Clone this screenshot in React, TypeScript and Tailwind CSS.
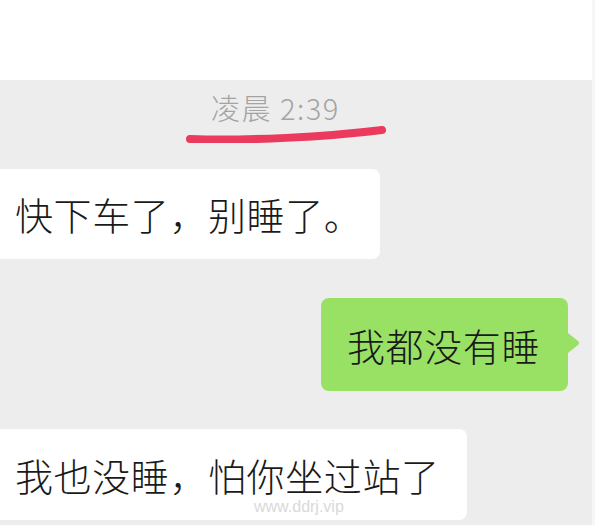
export default function App() {
  const font = { fontFamily: '"Noto Sans CJK SC", "Noto Sans", sans-serif' };

  return (
    <div className="w-[595px] h-[525px] overflow-hidden flex bg-[#ededed]" style={font}>
      <div className="w-[592px] shrink-0 flex flex-col">
        {/* top white strip */}
        <div className="h-[80px] shrink-0 bg-white" />

        <div className="flex flex-col">
          {/* time stamp + red marker underline */}
          <div className="mt-[13px] ml-[211px] text-[29px] leading-[29px] tracking-[1.5px] font-light text-[#a4a4a4]">
            凌晨 2:39
          </div>
          <svg className="ml-[186px] mt-[3px] block" width="202" height="18" viewBox="0 0 202 18">
            <path
              d="M4 14 C 60 16, 140 12, 196 5"
              fill="none"
              stroke="#eb3a5d"
              strokeWidth="8"
              strokeLinecap="round"
            />
          </svg>

          {/* incoming */}
          <div className="mt-[26px] w-[380px] h-[90px] flex items-center pl-[15px] bg-white rounded-r-[8px] text-[38px] leading-[38px] tracking-[0.6px] font-light text-[#1a1a1a]">
            快下车了，别睡了。
          </div>

          {/* outgoing */}
          <div className="mt-[39px] flex justify-end pr-[24px]">
            <div className="relative h-[93px] w-[247px] flex items-center pl-[26px] bg-[#98e165] rounded-[8px] text-[38px] leading-[38px] tracking-[0.6px] font-light text-[#1a1a1a]">
              我都没有睡
              <svg className="absolute left-full top-[35px]" width="13" height="20" viewBox="0 0 13 20">
                <path d="M0 0 L10 8 Q12 10 10 12 L0 20 Z" fill="#98e165" />
              </svg>
            </div>
          </div>

          {/* incoming */}
          <div className="relative mt-[38px] w-[467px] h-[91px] flex items-center pl-[15px] bg-white rounded-r-[8px] text-[38px] leading-[38px] tracking-[0.6px] font-light text-[#1a1a1a]">
            我也没睡，怕你坐过站了
            <span
              className="absolute left-[254px] top-[70px] text-[16px] leading-[16px] tracking-normal font-normal text-[#d9d9d9]"
              style={{ fontFamily: '"Liberation Sans", Arial, sans-serif' }}
            >
              www.ddrj.vip
            </span>
          </div>
        </div>
      </div>
      <div className="w-[3px] bg-[#f6f6f6]" />
    </div>
  );
}
